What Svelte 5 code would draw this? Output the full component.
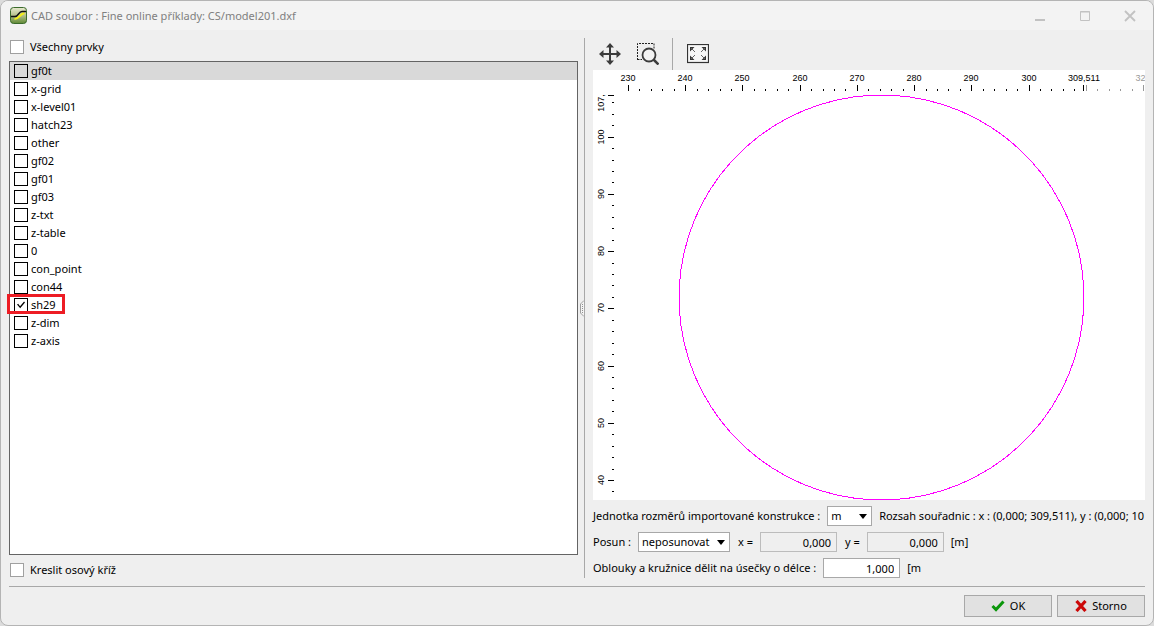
<script>
  const layers = [
    'gf0t', 'x-grid', 'x-level01', 'hatch23', 'other', 'gf02', 'gf01', 'gf03',
    'z-txt', 'z-table', '0', 'con_point', 'con44', 'sh29', 'z-dim', 'z-axis'
  ];
  let checked = $state(['sh29']);

  // Drawing area: model units to canvas units
  const scale = 57.22 / 10;
  const px = (x) => Math.round(35 + (x - 230) * scale);
  const py = (y) => Math.round(410 - (y - 40) * scale);

  const xTicks = [];
  for (let v = 230; v <= 320; v += 2) xTicks.push({ v, major: v % 10 === 0, out: v > 309.511 });
  const yTicks = [];
  for (let v = 38; v <= 106; v += 2) yTicks.push({ v, major: v % 10 === 0 });

  const circle = Array.from({ length: 72 }, (_, i) => {
    const a = ((i * 5 + 2.5) * Math.PI) / 180;
    return `${(288.5 + 202.5 * Math.cos(a)).toFixed(1)},${(227.5 + 202.5 * Math.sin(a)).toFixed(1)}`;
  }).join(' ');
</script>

<div class="window">
  <header>
    <svg class="logo" width="17" height="17" viewBox="0 0 17 17">
      <defs>
        <linearGradient id="lg" x1="0" y1="0" x2="0" y2="1">
          <stop offset="0" stop-color="#e8ead0" />
          <stop offset="0.5" stop-color="#b5c08c" />
          <stop offset="1" stop-color="#5f8a35" />
        </linearGradient>
      </defs>
      <rect x="0.5" y="0.5" width="16" height="16" rx="3" fill="url(#lg)" stroke="#3b6b2c" />
      <path d="M4.500 12C9 12 9 7.500 14.500 6" fill="none" stroke="#f4ee1c" stroke-width="2" />
      <path d="M1 9.500H5C8.500 9.500 8.500 4.500 12 4.500H16" fill="none" stroke="#111" stroke-width="1.400" />
    </svg>
    <h1>CAD soubor : Fine online příklady: CS/model201.dxf</h1>
    <div class="sys">
      <button aria-label="Minimalizovat"><svg width="12" height="12" viewBox="0 0 12 12"><path d="M1 10H11" stroke-width="2" /></svg></button>
      <button aria-label="Maximalizovat"><svg width="12" height="12" viewBox="0 0 12 12"><path d="M1.500 1.500H10.500V10.500H1.500ZM1 2H11" /></svg></button>
      <button aria-label="Zavřít"><svg width="12" height="12" viewBox="0 0 12 12"><path d="M1 1L11 11M11 1L1 11" stroke-width="1.800" /></svg></button>
    </div>
  </header>

  <main>
    <section class="left">
      <label class="check"><input type="checkbox" />Všechny prvky</label>
      <ul>
        {#each layers as name, i}
          <li class:current={i === 0}>
            <label class:marked={name === 'sh29'}>
              <input type="checkbox" value={name} bind:group={checked} />{name}
            </label>
          </li>
        {/each}
      </ul>
      <label class="check"><input type="checkbox" />Kreslit osový kříž</label>
    </section>

    <div class="splitter">
      <svg width="4" height="17" viewBox="0 0 4 17">
        <path d="M4 0.500L0.500 4V13L4 16.500" fill="#f4f4f4" stroke="#a0a0a0" />
        <path d="M2.500 4V14" stroke="#909090" stroke-dasharray="1 1" />
      </svg>
    </div>

    <section class="right">
      <div class="toolbar">
        <button aria-label="Posun">
          <svg width="22" height="22" viewBox="0 0 22 22">
            <path d="M11 3V19M3 11H19" stroke="#3c3c3c" stroke-width="2" />
            <path d="M11 0L15 4.500H7ZM11 22L15 17.500H7ZM0 11L4.500 7V15ZM22 11L17.500 7V15Z" fill="#3c3c3c" />
          </svg>
        </button>
        <button aria-label="Zvětšit výřez">
          <svg width="22" height="22" viewBox="0 0 22 22" fill="none" stroke="#3c3c3c">
            <path d="M0.500 17V0.500H17V6M0.500 16.500H5" stroke="#222" stroke-dasharray="2 1" />
            <circle cx="12" cy="12" r="6.500" stroke-width="1.800" fill="#f3f3f3" />
            <path d="M16.500 16.500L21.500 21.500" stroke-width="2.500" />
          </svg>
        </button>
        <span class="divider"></span>
        <button aria-label="Zobrazit vše">
          <svg width="22" height="20" viewBox="0 0 22 20">
            <rect x="0.500" y="0.500" width="21" height="18" fill="#f6f6f6" stroke="#333" stroke-width="1.200" />
            <path d="M3 3H7.500L3 7.500ZM19 3H14.500L19 7.500ZM3 16H7.500L3 11.500ZM19 16H14.500L19 11.500Z" fill="#333" />
            <path d="M4 4L8 8M18 4L14 8M4 15L8 11M18 15L14 11" stroke="#666" />
          </svg>
        </button>
      </div>

      <div class="canvas">
        <svg viewBox="0 0 552 430">
          <g shape-rendering="crispEdges">
            {#each xTicks as t}
              <rect x={px(t.v)} y={t.major ? 15 : 19} width="1" height={t.major ? 6 : 2} class:out={t.out} />
            {/each}
            <rect x="490" y="15" width="1" height="6" />
            {#each yTicks as t}
              <rect x={t.major ? 15 : 19} y={py(t.v)} width={t.major ? 6 : 2} height="1" />
            {/each}
            <rect x="15" y="25" width="6" height="1" />
            <polygon points={circle} />
          </g>
          {#each xTicks.filter((t) => t.major && t.v !== 310) as t}
            <text x={px(t.v)} y="11" class:out={t.out}>{t.v}</text>
          {/each}
          <text x="491" y="11">309,511</text>
          {#each yTicks.filter((t) => t.major) as t}
            <text transform="translate(11 {py(t.v)}) rotate(-90)">{t.v}</text>
          {/each}
          <text transform="translate(11 33) rotate(-90)">107,</text>
        </svg>
      </div>

      <div class="form">
        <div class="row">
          <label for="unit">Jednotka rozměrů importované konstrukce :</label>
          <span class="combo unit">
            <select id="unit"><option>m</option><option>mm</option></select>
            <svg width="8" height="5" viewBox="0 0 8 5"><path d="M0 0H8L4 5Z" /></svg>
          </span>
          <span class="range">Rozsah souřadnic : x : (0,000; 309,511), y : (0,000; 10</span>
        </div>
        <div class="row">
          <label for="shift">Posun :</label>
          <span class="combo shift">
            <select id="shift"><option>neposunovat</option><option>posunout</option></select>
            <svg width="8" height="5" viewBox="0 0 8 5"><path d="M0 0H8L4 5Z" /></svg>
          </span>
          <label class="axis" for="dx">x =</label>
          <input id="dx" type="text" value="0,000" disabled />
          <label class="axis" for="dy">y =</label>
          <input id="dy" type="text" value="0,000" disabled />
          <span>[m]</span>
        </div>
        <div class="row">
          <label for="seg">Oblouky a kružnice dělit na úsečky o délce :</label>
          <input id="seg" type="text" value="1,000" />
          <span>[m</span>
        </div>
      </div>
    </section>
  </main>

  <footer>
    <button>
      <svg width="14" height="12" viewBox="0 0 14 12"><path d="M1.500 6L5 9.500L12.500 1.500" fill="none" stroke="#0a960a" stroke-width="3" /></svg>OK
    </button>
    <button>
      <svg width="12" height="12" viewBox="0 0 12 12"><path d="M1.500 1L10.500 11M10.500 1L1.500 11" stroke="#cc0808" stroke-width="3.200" /></svg>Storno
    </button>
  </footer>
</div>

<style>
  :global(body) { background: #dcdcdc; }
  * { box-sizing: border-box; }
  .window {
    display: flex;
    flex-direction: column;
    min-height: 100vh;
    border: 1px solid #b4b4b4;
    border-radius: 8px;
    background: #efefef;
    overflow: hidden;
    color: #000;
    font: 11px/16px "Noto Sans", "Open Sans", sans-serif;
  }
  button, input, select { font: inherit; color: inherit; margin: 0; }
  svg { display: block; flex: none; }
  header {
    display: flex;
    align-items: center;
    gap: 4px;
    height: 29px;
    padding-left: 9px;
    background: #f3f3f3;
  }
  h1 { flex: 1; margin: 0; font: inherit; color: #808080; white-space: nowrap; }
  .sys { display: flex; padding-right: 1px; }
  .sys button { width: 45px; height: 29px; padding: 0; border: 0; background: none; display: grid; place-items: center; }
  .sys svg { fill: none; stroke: #c2c2c2; }
  main {
    flex: 1;
    display: grid;
    grid-template-columns: minmax(0, 569fr) 15px minmax(0, 552fr);
    margin: 0 8px;
    padding: 8px 0;
    border-bottom: 1px solid #a8a8a8;
  }
  .left { display: flex; flex-direction: column; }
  .check { display: flex; align-items: center; gap: 6px; height: 16px; padding-left: 1px; }
  .check:first-child { height: 18px; }
  input[type="checkbox"] {
    appearance: none;
    flex: none;
    width: 14px;
    height: 14px;
    border: 1px solid #a0a0a0;
    background: #fff;
  }
  ul {
    flex: 1;
    margin: 5px 0 7px;
    padding: 0;
    list-style: none;
    border: 1px solid #646464;
    background: #fff;
  }
  li { height: 18px; }
  li label { position: relative; display: inline-flex; align-items: center; gap: 3px; height: 18px; padding-left: 4px; }
  li input[type="checkbox"] { border-color: #000; }
  .current { background: #d9d9d9; }
  .current input[type="checkbox"] { background: #d9d9d9; }
  li input:checked::after {
    content: "";
    display: block;
    width: 8px;
    height: 8px;
    margin: 2px;
    background: #000;
    clip-path: polygon(0 45%, 14% 35%, 38% 65%, 88% 5%, 100% 18%, 40% 92%);
  }
  .marked::after {
    content: "";
    position: absolute;
    inset: -2px -9px 0 -3px;
    border: 3px solid #ed1c24;
  }
  .splitter { display: flex; align-items: center; padding-left: 2px; }
  .splitter::after { content: ""; width: 1px; align-self: stretch; background: #a8a8a8; }
  .right { display: flex; flex-direction: column; min-width: 0; }
  .toolbar { display: flex; align-items: center; height: 32px; padding-left: 6px; gap: 16px; }
  .toolbar button { padding: 0; border: 0; background: none; }
  .divider { width: 1px; height: 32px; margin-right: -2px; margin-left: -3px; background: #a8a8a8; }
  .canvas { flex: 1; display: flex; background: #fff; }
  .canvas svg { width: 100%; height: 100%; }
  .canvas text { font: 9px "Liberation Sans", Arial, sans-serif; text-anchor: middle; }
  .canvas .out { fill: #999; }
  polygon { fill: none; stroke: #f0f; stroke-width: 1; }
  .form { display: flex; flex-direction: column; gap: 6px; padding-top: 6px; }
  .row { display: flex; align-items: center; gap: 7px; height: 20px; white-space: nowrap; }
  .combo { position: relative; flex: none; height: 20px; }
  .unit { width: 45px; }
  .shift { width: 92px; }
  select {
    appearance: none;
    width: 100%;
    height: 20px;
    padding: 0 3px;
    border: 1px solid #a8a8a8;
    border-radius: 0;
    background: #fff;
  }
  .combo svg { position: absolute; right: 5px; top: 8px; pointer-events: none; }
  input[type="text"] {
    width: 77px;
    height: 20px;
    padding: 0 5px;
    border: 1px solid #a8a8a8;
    background: #fff;
    text-align: right;
  }
  input[type="text"]:disabled { background: #efefef; border-color: #bcbcbc; color: #000; }
  .axis { padding-left: 1px; }
  footer { display: flex; justify-content: flex-end; gap: 5px; padding: 8px; }
  footer button {
    display: flex;
    align-items: center;
    justify-content: center;
    gap: 5px;
    width: 88px;
    height: 22px;
    padding: 0;
    border: 1px solid #a8a8a8;
    background: #e1e1e1;
  }
</style>
